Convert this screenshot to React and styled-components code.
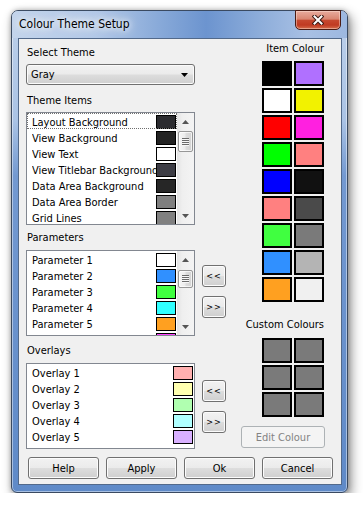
import React from 'react';
import styled, { createGlobalStyle } from 'styled-components';

const FONT = `"DejaVu Sans Condensed", "Liberation Sans", sans-serif`;

const Global = createGlobalStyle`
  html, body { margin: 0; padding: 0; background: #fff; }
  body { font-family: ${FONT}; font-size: 11px; color: #000; }
`;

const Window = styled.div`
  box-sizing: border-box;
  margin: 10px 0 0 11px;
  width: 337px;
  height: 483px;
  border: 1px solid #3a4a61;
  border-radius: 7px 7px 6px 6px;
  padding: 0 5px 7px 6px;
  display: flex;
  flex-direction: column;
  background: linear-gradient(to bottom, #bdd0ea 0px, #aac3e5 110px, #7399d1 165px, #5f8ac8 100%);
  box-shadow: inset 0 0 0 1px rgba(255, 255, 255, 0.45), 3px 5px 12px rgba(0, 0, 0, 0.45),
    0 0 5px rgba(0, 0, 0, 0.25);
`;

const TitleBar = styled.div`
  height: 27px;
  margin: 0 -5px 0 -6px;
  padding: 0 5px 0 6px;
  border-radius: 6px 6px 0 0;
  display: flex;
  align-items: flex-start;
  background: linear-gradient(
    90deg,
    #c3d4eb 0%,
    #b2c8e7 25%,
    #86a8d8 45%,
    #6c94cf 58%,
    #8dadda 74%,
    #a8c0e4 88%,
    #9db8e0 100%
  );
`;

const Title = styled.span`
  margin: 6px 0 0 1px;
  font-size: 12px;
  line-height: 15px;
  color: #000;
  text-shadow: 0 0 6px #fff, 0 0 10px rgba(255, 255, 255, 0.9), 0 0 14px rgba(255, 255, 255, 0.7);
`;

const CloseButton = styled.div`
  margin: -1px 1px 0 auto;
  width: 46px;
  height: 20px;
  box-sizing: border-box;
  border: 1px solid #4a1c14;
  border-radius: 0 0 5px 5px;
  background: linear-gradient(to bottom, #e8ab9e 0%, #d98671 45%, #c6482f 52%, #c03a22 78%, #d56d4c 100%);
  box-shadow: inset 0 0 0 1px rgba(255, 230, 220, 0.45);
  display: flex;
  align-items: center;
  justify-content: center;
`;

const Client = styled.div`
  flex: 1;
  box-sizing: border-box;
  border: 1px solid #52698a;
  background: #f0f0f0;
  padding: 7px 0 4px 7px;
  display: flex;
  flex-direction: column;
`;

const Body = styled.div`
  display: flex;
  align-items: flex-start;
`;

const LeftCol = styled.div`
  width: 200px;
  display: flex;
  flex-direction: column;
`;

const RightCol = styled.div`
  width: 84px;
  margin-left: 15px;
  display: flex;
  flex-direction: column;
  align-items: flex-end;
`;

const Label = styled.div`
  height: 14px;
  line-height: 14px;
  padding-left: 1px;
  white-space: nowrap;
  margin-top: ${(p) => p.$mt || 0}px;
  margin-bottom: ${(p) => p.$mb || 0}px;
  margin-right: ${(p) => p.$mr || 0}px;
`;

const Combo = styled.div`
  box-sizing: border-box;
  width: 169px;
  height: 21px;
  border: 1px solid #707070;
  border-radius: 3px;
  background: linear-gradient(to bottom, #f2f2f2 0%, #ebebeb 48%, #dddddd 52%, #cfcfcf 100%);
  box-shadow: inset 0 0 0 1px #fbfbfb;
  display: flex;
  align-items: center;
  padding: 0 6px 0 4px;
`;

const ComboText = styled.span`
  flex: 1;
`;

const ListLine = styled.div`
  display: flex;
  align-items: center;
  gap: 7px;
`;

const ListBox = styled.div`
  box-sizing: border-box;
  width: 169px;
  height: ${(p) => p.$h}px;
  border: 1px solid #828790;
  background: #fff;
  display: flex;
  overflow: hidden;
  flex: none;
`;

const Items = styled.div`
  flex: 1;
  min-width: 0;
  overflow: hidden;
`;

const Row = styled.div`
  height: 16px;
  display: flex;
  align-items: flex-start;
  padding-left: 5px;
  ${(p) => (p.$focus ? 'outline: 1px dotted #6f6f6f; outline-offset: -1px;' : '')}
`;

const RowText = styled.span`
  flex: 1;
  min-width: 0;
  height: 16px;
  overflow: hidden;
  white-space: nowrap;
  line-height: 16px;
  padding-top: 2px;
  box-sizing: border-box;
`;

const SmallSwatch = styled.span`
  flex: none;
  box-sizing: border-box;
  width: 20px;
  height: 14px;
  margin: 2px 1px 0 0;
  border: 1px solid #000;
  background: ${(p) => p.$c};
`;

const ScrollBar = styled.div`
  flex: none;
  width: 17px;
  display: flex;
  flex-direction: column;
  background: linear-gradient(to right, #e3e3e3 0%, #efefef 30%, #f4f4f4 100%);
`;

const ScrollArrow = styled.div`
  height: 17px;
  flex: none;
  display: flex;
  align-items: center;
  justify-content: center;
`;

const Track = styled.div`
  flex: 1;
`;

const Thumb = styled.div`
  box-sizing: border-box;
  margin: ${(p) => p.$top}px 1px 0 1px;
  height: ${(p) => p.$h}px;
  border: 1px solid #979797;
  border-radius: 2px;
  background: linear-gradient(to right, #f6f6f6 0%, #ececec 45%, #dcdcdc 55%, #d2d2d2 100%);
  box-shadow: inset 0 0 0 1px rgba(255, 255, 255, 0.7);
  display: flex;
  align-items: center;
  justify-content: center;
`;

const Grip = styled.div`
  width: 7px;
  height: 8px;
  background: repeating-linear-gradient(to bottom, #6b6b6b 0 1px, #f7f7f7 1px 2px);
`;

const ArrowCol = styled.div`
  display: flex;
  flex-direction: column;
  gap: 9px;
  margin-top: ${(p) => p.$mt || 0}px;
`;

const Btn = styled.button`
  box-sizing: border-box;
  width: ${(p) => p.$w || 71}px;
  height: 22px;
  padding: 0;
  margin: 0;
  font-family: ${FONT};
  font-size: ${(p) => p.$fs || 11}px;
  letter-spacing: ${(p) => p.$ls || 0}px;
  color: #000;
  border: 1px solid #707070;
  border-radius: 3px;
  background: linear-gradient(to bottom, #f2f2f2 0%, #ebebeb 48%, #dddddd 52%, #cfcfcf 100%);
  box-shadow: inset 0 0 0 1px #fcfcfc;
  cursor: default;
  &:disabled {
    color: #838383;
    border-color: #adb2b5;
    background: #f4f4f4;
    box-shadow: none;
  }
`;

const SwatchGrid = styled.div`
  display: grid;
  grid-template-columns: repeat(2, 30px);
  grid-auto-rows: 25px;
  gap: 2px;
  margin-right: 1px;
`;

const BigSwatch = styled.div`
  box-sizing: border-box;
  border: 2px solid #000;
  background: ${(p) => p.$c};
`;

const EditButton = styled(Btn)`
  margin-top: 9px;
  align-self: stretch;
  width: auto;
`;

const Footer = styled.div`
  margin: 8px 0 0 2px;
  width: 305px;
  display: flex;
  justify-content: space-between;
`;

const CloseIcon = () => (
  <svg width="12" height="10" viewBox="0 0 12 10">
    <path d="M2.5 1.5 L9.5 8.5 M9.5 1.5 L2.5 8.5" stroke="#3a1a14" strokeWidth="4" strokeLinecap="square" />
    <path d="M2.5 1.5 L9.5 8.5 M9.5 1.5 L2.5 8.5" stroke="#ffffff" strokeWidth="2" strokeLinecap="square" />
  </svg>
);

const Tri = ({ up, color = '#555' }) => (
  <svg width="7" height="4" viewBox="0 0 7 4">
    <polygon points={up ? '0,4 3.5,0 7,4' : '0,0 7,0 3.5,4'} fill={color} />
  </svg>
);

const Scroll = ({ top, h }) => (
  <ScrollBar>
    <ScrollArrow>
      <Tri up />
    </ScrollArrow>
    <Track>
      <Thumb $top={top} $h={h}>
        <Grip />
      </Thumb>
    </Track>
    <ScrollArrow>
      <Tri />
    </ScrollArrow>
  </ScrollBar>
);

const themeItems = [
  ['Layout Background', '#2b2b2f'],
  ['View Background', '#232323'],
  ['View Text', '#ffffff'],
  ['View Titlebar Background', '#3c3c44'],
  ['Data Area Background', '#262626'],
  ['Data Area Border', '#7f7f7f'],
  ['Grid Lines', '#808080'],
];

const params = [
  ['Parameter 1', '#ffffff'],
  ['Parameter 2', '#3090ff'],
  ['Parameter 3', '#40ff40'],
  ['Parameter 4', '#30ffff'],
  ['Parameter 5', '#ffa020'],
  ['Parameter 6', '#ff40ff'],
];

const overlays = [
  ['Overlay 1', '#ffb0b0'],
  ['Overlay 2', '#ffffb0'],
  ['Overlay 3', '#b0ffb0'],
  ['Overlay 4', '#b0ffff'],
  ['Overlay 5', '#d8b0ff'],
];

const itemColours = [
  '#000000', '#b070ff',
  '#ffffff', '#f2f200',
  '#ff0000', '#ff20e0',
  '#00ff00', '#ff8080',
  '#0000ff', '#111111',
  '#ff8080', '#4a4a4a',
  '#40ff40', '#7a7a7a',
  '#3090ff', '#b4b4b4',
  '#ffa020', '#f0f0f0',
];

const customColours = Array(6).fill('#7a7a7a');

const Rows = ({ data, focusFirst }) => (
  <Items>
    {data.map(([name, c], i) => (
      <Row key={name} $focus={focusFirst && i === 0}>
        <RowText>{name}</RowText>
        <SmallSwatch $c={c} />
      </Row>
    ))}
  </Items>
);

const Arrows = ({ mt }) => (
  <ArrowCol $mt={mt}>
    <Btn $w={24} $fs={9} $ls={1}>&lt;&lt;</Btn>
    <Btn $w={24} $fs={9} $ls={1}>&gt;&gt;</Btn>
  </ArrowCol>
);

export default function App() {
  return (
    <>
      <Global />
      <Window>
        <TitleBar>
          <Title>Colour Theme Setup</Title>
          <CloseButton>
            <CloseIcon />
          </CloseButton>
        </TitleBar>
        <Client>
          <Body>
            <LeftCol>
              <Label $mb={4}>Select Theme</Label>
              <Combo>
                <ComboText>Gray</ComboText>
                <Tri color="#000" />
              </Combo>
              <Label $mt={9} $mb={4}>Theme Items</Label>
              <ListBox $h={113}>
                <Rows data={themeItems} focusFirst />
                <Scroll top={1} h={21} />
              </ListBox>
              <Label $mt={6} $mb={5}>Parameters</Label>
              <ListLine>
                <ListBox $h={86}>
                  <Rows data={params} />
                  <Scroll top={2} h={18} />
                </ListBox>
                <Arrows mt={-3} />
              </ListLine>
              <Label $mt={8} $mb={5}>Overlays</Label>
              <ListLine>
                <ListBox $h={86}>
                  <Rows data={overlays} />
                </ListBox>
                <Arrows />
              </ListLine>
            </LeftCol>
            <RightCol>
              <Label $mt={-4} $mb={5} $mr={1}>Item Colour</Label>
              <SwatchGrid>
                {itemColours.map((c, i) => (
                  <BigSwatch key={i} $c={c} />
                ))}
              </SwatchGrid>
              <Label $mt={16} $mb={6} $mr={1}>Custom Colours</Label>
              <SwatchGrid>
                {customColours.map((c, i) => (
                  <BigSwatch key={i} $c={c} />
                ))}
              </SwatchGrid>
              <EditButton disabled>Edit Colour</EditButton>
            </RightCol>
          </Body>
          <Footer>
            <Btn>Help</Btn>
            <Btn>Apply</Btn>
            <Btn>Ok</Btn>
            <Btn>Cancel</Btn>
          </Footer>
        </Client>
      </Window>
    </>
  );
}
